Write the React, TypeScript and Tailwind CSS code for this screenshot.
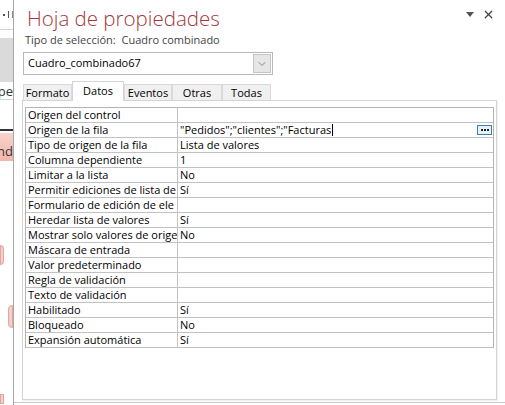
import { ChevronDown, X } from 'lucide-react';

const rows: { label: string; value: string; active?: boolean }[] = [
  { label: 'Origen del control', value: '' },
  { label: 'Origen de la fila', value: '"Pedidos";"clientes";"Facturas', active: true },
  { label: 'Tipo de origen de la fila', value: 'Lista de valores' },
  { label: 'Columna dependiente', value: '1' },
  { label: 'Limitar a la lista', value: 'No' },
  { label: 'Permitir ediciones de lista de', value: 'Sí' },
  { label: 'Formulario de edición de ele', value: '' },
  { label: 'Heredar lista de valores', value: 'Sí' },
  { label: 'Mostrar solo valores de orige', value: 'No' },
  { label: 'Máscara de entrada', value: '' },
  { label: 'Valor predeterminado', value: '' },
  { label: 'Regla de validación', value: '' },
  { label: 'Texto de validación', value: '' },
  { label: 'Habilitado', value: 'Sí' },
  { label: 'Bloqueado', value: 'No' },
  { label: 'Expansión automática', value: 'Sí' },
];

const tabs = [
  { name: 'Formato', w: 'w-[49px]' },
  { name: 'Datos', w: 'w-[52px]' },
  { name: 'Eventos', w: 'w-[48px]' },
  { name: 'Otras', w: 'w-[50px]' },
  { name: 'Todas', w: 'w-[49px]' },
];

function BackgroundStrip() {
  // trozo del diseñador de formularios que asoma por la izquierda
  return (
    <div className="w-[13px] h-full flex flex-col overflow-hidden bg-white text-[#444]">
      <div className="h-[30px] border-b border-[#d6d6d6] flex items-center pl-[3px] gap-[3px]">
        <span className="w-[2px] h-[2px] bg-[#555]" />
        <span className="w-[1px] h-[7px] bg-[#555]" />
        <span className="w-[1px] h-[7px] bg-[#888]" />
      </div>
      <div className="h-[8px]" />
      <div className="h-[44px] bg-[#dadada]" />
      <div className="h-[18px] border-b border-[#d6d6d6] flex justify-end items-center">
        <span className="text-[13px] leading-[14px] text-[#333]">pe</span>
      </div>
      <div className="h-[31px] border-b-2 border-[#333]" />
      <div className="h-[28px] mt-[2px] bg-gradient-to-b from-[#f7d3cc] to-[#f2b5aa] flex justify-end items-end pb-[3px]">
        <span className="text-[13px] leading-[14px] text-[#333]">nd</span>
      </div>
      <div className="h-[84px]" />
      <div className="h-[20px] w-[4px] bg-[#f5d0ca] border border-[#e3a69c] rounded-r-sm" />
      <div className="h-[40px]" />
      <div className="h-[23px] w-[5px] ml-[8px] bg-[#f5d0ca] border border-[#e3a69c] rounded-l-sm" />
      <div className="h-[66px]" />
      <div className="h-[10px] w-[4px] bg-[#f5d0ca] border border-[#e3a69c]" />
    </div>
  );
}

export default function App() {
  return (
    <div
      className="w-[505px] h-[405px] flex bg-white overflow-hidden"
      style={{ fontFamily: '"Open Sans", "Noto Sans", sans-serif' }}
    >
      <BackgroundStrip />
      <div className="flex-1 h-full border-l border-[#a8a8a8] relative">
        <div className="h-[403px] border-b border-[#c8c8c8] pl-[8px] pr-[8px] flex flex-col">
          <div className="flex items-start h-[32px]">
            <h1 className="mt-[6px] ml-[5px] text-[20.5px] leading-[24px] font-light text-[#a4373a]">
              Hoja de propiedades
            </h1>
            <div className="ml-auto flex items-center gap-[8px] mt-[8px] mr-[2px] text-[#444]">
              <svg width="8" height="5" viewBox="0 0 8 5">
                <path d="M0 0h8L4 5z" fill="#555" />
              </svg>
              <X size={13} strokeWidth={2.2} />
            </div>
          </div>
          <div className="ml-[3px] text-[11px] leading-[15px] text-[#444]">
            Tipo de selección:&nbsp;&nbsp;Cuadro combinado
          </div>

          <div className="mt-[5px] ml-[1px] w-[250px] h-[23px] border border-[#b9b9b9] flex items-center bg-white">
            <span className="pl-[4px] text-[11px] text-black flex-1">Cuadro_combinado67</span>
            <div className="w-[18px] h-[19px] mr-[1px] bg-[#e6e6e6] border border-[#c4c4c4] flex items-center justify-center text-[#666]">
              <ChevronDown size={12} strokeWidth={1.5} />
            </div>
          </div>

          <div className="mt-[5px] ml-[1px] flex items-end h-[20px] relative z-10">
            {tabs.map((t) => {
              const active = t.name === 'Datos';
              return (
                <div
                  key={t.name}
                  className={
                    active
                      ? `${t.w} h-[20px] -mb-px bg-white border border-b-0 border-[#d4d4d4] text-center text-[11px] leading-[17px] text-black`
                      : `${t.w} h-[16px] bg-[#f0f0f0] border border-b-0 border-[#dadada] text-center text-[11px] leading-[16px] text-black`
                  }
                >
                  {t.name}
                </div>
              );
            })}
          </div>

          <div className="h-[300px] w-[475px] border border-[#d4d4d4] shadow-[1px_1px_1px_rgba(0,0,0,0.06)] pl-[2px] pt-[6px]">
            <div className="w-[469px] border border-[#b4b4b4] border-b-0">
              {rows.map((r) => (
                <div key={r.label} className="flex h-[15px] border-b border-[#c2c2c2] text-[11px] leading-[14px] text-black">
                  <div className="w-[152px] shrink-0 border-r border-[#c2c2c2] pl-[2px] whitespace-nowrap overflow-hidden">
                    {r.label}
                  </div>
                  <div className="flex-1 pl-[2px] flex items-center whitespace-nowrap">
                    <span>{r.value}</span>
                    {r.active && (
                      <>
                        <span className="w-px h-[12px] bg-black ml-[1px]" />
                        <span className="ml-auto mr-[1px] w-[15px] h-[10px] border border-[#3c7fb1] bg-[#e5f1fb] flex items-center justify-center gap-[1px]">
                          <span className="w-[2px] h-[2px] bg-[#222]" />
                          <span className="w-[2px] h-[2px] bg-[#222]" />
                          <span className="w-[2px] h-[2px] bg-[#222]" />
                        </span>
                      </>
                    )}
                  </div>
                </div>
              ))}
            </div>
          </div>
        </div>
      </div>
    </div>
  );
}
